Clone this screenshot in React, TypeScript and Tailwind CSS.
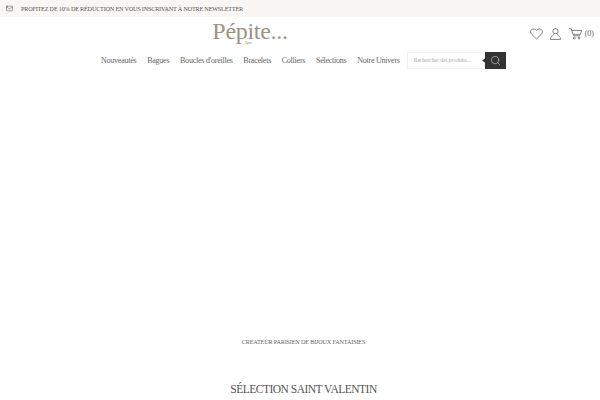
import { Mail, Search } from 'lucide-react'

const NAV = ['Nouveautés', 'Bagues', "Boucles d'oreilles", 'Bracelets', 'Colliers', 'Sélections', 'Notre Univers']

function Heart() {
  return (
    <svg width="13" height="12" viewBox="0 0 13 12" fill="none" stroke="#666" strokeWidth="0.8">
      <path d="M6.5 11 1.6 6.2C.2 4.8.3 2.7 1.6 1.6 3 .5 5.2.8 6.5 2.6 7.8.8 10 .5 11.4 1.6c1.3 1.1 1.4 3.2 0 4.6Z" />
    </svg>
  )
}

function User() {
  return (
    <svg width="11" height="12" viewBox="0 0 11 12" fill="none" stroke="#666" strokeWidth="0.8">
      <circle cx="5.5" cy="3.2" r="2.6" />
      <path d="M3.8 5.6C3.6 7 2.6 8 1.4 8.8.6 9.3.5 10.2.5 11.4h10c0-1.2-.1-2.1-.9-2.6C8.400 8 7.400 7 7.200 5.600" />
    </svg>
  )
}

function Cart() {
  return (
    <svg width="13" height="12" viewBox="0 0 13 12" fill="none" stroke="#666" strokeWidth="0.8">
      <path d="M.2.6h2l2.300 7.200h6.700" />
      <path d="M3 2.500h9.600l-1.200 3.800H4.300" />
      <circle cx="5.300" cy="10" r="1" />
      <circle cx="10" cy="10" r="1" />
    </svg>
  )
}

export default function App() {
  return (
    <div className="h-[400px] w-[600px] overflow-hidden bg-white font-['Liberation_Serif',serif]">
      <div className="flex h-[17px] items-center gap-[8px] bg-[#faf6f3] pl-[6px] text-[6.2px] tracking-[-0.2px] text-[#555]">
        <Mail size={7} strokeWidth={1.5} className="text-[#333]" />
        <span>PROFITEZ DE 10% DE RÉDUCTION EN VOUS INSCRIVANT À NOTRE NEWSLETTER</span>
      </div>

      <header className="relative">
        <div className="flex h-[35px] items-start justify-center pr-[100px]">
          <div className="relative mt-[-2px] text-[24px] leading-[32px] tracking-[-0.3px] text-[#9c9484]">
            Pépite...
            <span className="absolute left-[33px] top-[26px] text-[3px] leading-[4px] text-[#9c9484]">Bijoux</span>
          </div>
        </div>

        <div className="absolute right-[6px] top-[11px] flex items-center text-[#666]">
          <Heart />
          <span className="ml-[7px]"><User /></span>
          <span className="ml-[8px]"><Cart /></span>
          <span className="ml-[3px] text-[8px]">(0)</span>
        </div>

        <nav className="flex h-[17px] items-center pl-[101px]">
          <div className="flex gap-[10.700px] text-[8px] tracking-[-0.23px] text-[#666]">
            {NAV.map((item) => (
              <span key={item} className="whitespace-nowrap">{item}</span>
            ))}
          </div>
          <div className="ml-[7px] flex h-[17px] w-[99px] shrink-0">
            <div className="flex flex-1 items-center border border-[#f0f0f0] pl-[6px] text-[5.5px] text-[#aaa]">
              Rechercher des produits...
            </div>
            <div className="relative flex w-[21px] items-center justify-center bg-[#333]">
              <span className="absolute left-[-2px] top-[7px] h-[3px] w-[3px] rotate-45 bg-[#333]" />
              <Search size={11} strokeWidth={1} className="text-white" />
            </div>
          </div>
        </nav>
      </header>

      <main className="flex flex-col items-center pt-[268px] pl-[7px]">
        <p className="text-[6.2px] leading-[10px] tracking-[-0.18px] text-[#666]">CREATEUR PARISIEN DE BIJOUX FANTAISIES</p>
        <h2 className="mt-[34px] text-[11.500px] leading-[16px] tracking-[-0.5px] text-[#555]">SÉLECTION SAINT VALENTIN</h2>
      </main>
    </div>
  )
}
